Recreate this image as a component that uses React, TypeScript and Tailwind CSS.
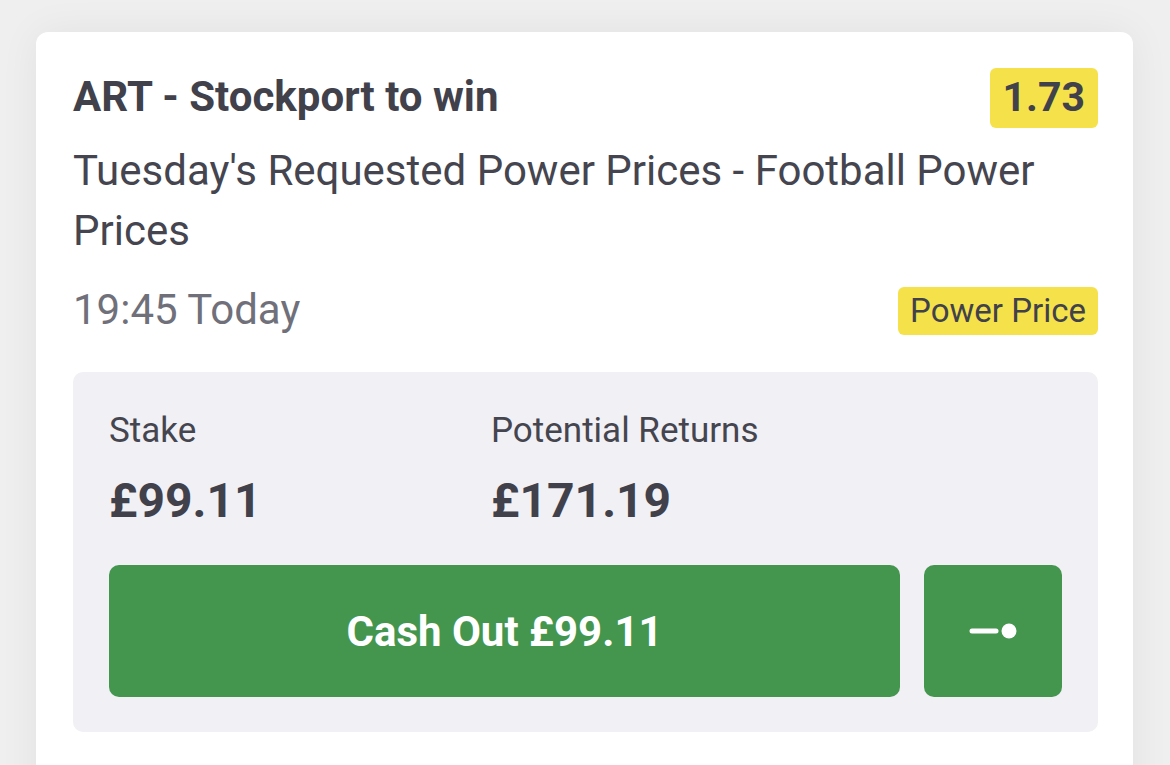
import React from "react";

export default function App() {
  return (
    <div
      className="w-[1170px] h-[765px] overflow-hidden bg-[#efefef]"
      style={{ fontFamily: "Roboto, 'Noto Sans', sans-serif" }}
    >
      <div className="ml-[36px] mt-[32px] w-[1097px] h-[800px] rounded-[12px] bg-white shadow-[0_0_40px_rgba(0,0,0,0.06)] pl-[37px] pr-[35px] pt-[36px]">
        <div className="flex items-center justify-between h-[60px]">
          <div className="text-[42px] leading-[56px] font-bold text-[#41414b] -mt-[3px]">ART - Stockport to win</div>
          <div className="h-[60px] px-[13px] rounded-[6px] bg-[#f5e24a] flex items-center text-[41px] font-bold text-[#41414b]">1.73</div>
        </div>
        <div className="mt-[13px] text-[42px] leading-[60px] text-[#45454f] pr-[20px]">
          Tuesday's Requested Power Prices - Football Power Prices
        </div>
        <div className="mt-[26px] flex items-center justify-between h-[48px]">
          <div className="text-[42px] leading-[48px] text-[#70707a] -mt-[3px]">19:45 Today</div>
          <div className="h-[48px] w-[200px] rounded-[6px] bg-[#f5e24a] flex items-center justify-center text-[33px] text-[#41414b]">Power Price</div>
        </div>
        <div className="mt-[37px] rounded-[10px] bg-[#f0f0f5] pl-[36px] pr-[36px] pt-[39px] pb-[35px]">
          <div className="flex">
            <div className="w-[382px]">
              <div className="text-[35px] leading-[40px] text-[#45454f]">Stake</div>
              <div className="mt-[22px] text-[48px] leading-[56px] font-bold text-[#41414b]">£99.11</div>
            </div>
            <div>
              <div className="text-[35px] leading-[40px] text-[#45454f]">Potential Returns</div>
              <div className="mt-[22px] text-[48px] leading-[56px] font-bold text-[#41414b]">£171.19</div>
            </div>
          </div>
          <div className="mt-[36px] flex gap-[24px] h-[132px]">
            <div className="flex-1 rounded-[10px] bg-[#44964f] flex items-center justify-center text-white text-[42px] font-bold">
              Cash Out £99.11
            </div>
            <div className="w-[138px] rounded-[10px] bg-[#44964f] flex items-center justify-center">
              <svg width="48" height="16" viewBox="0 0 48 16">
                <line x1="3" y1="8" x2="27" y2="8" stroke="white" strokeWidth="5" strokeLinecap="round" />
                <circle cx="40" cy="8" r="7.5" fill="white" />
              </svg>
            </div>
          </div>
        </div>
      </div>
    </div>
  );
}
